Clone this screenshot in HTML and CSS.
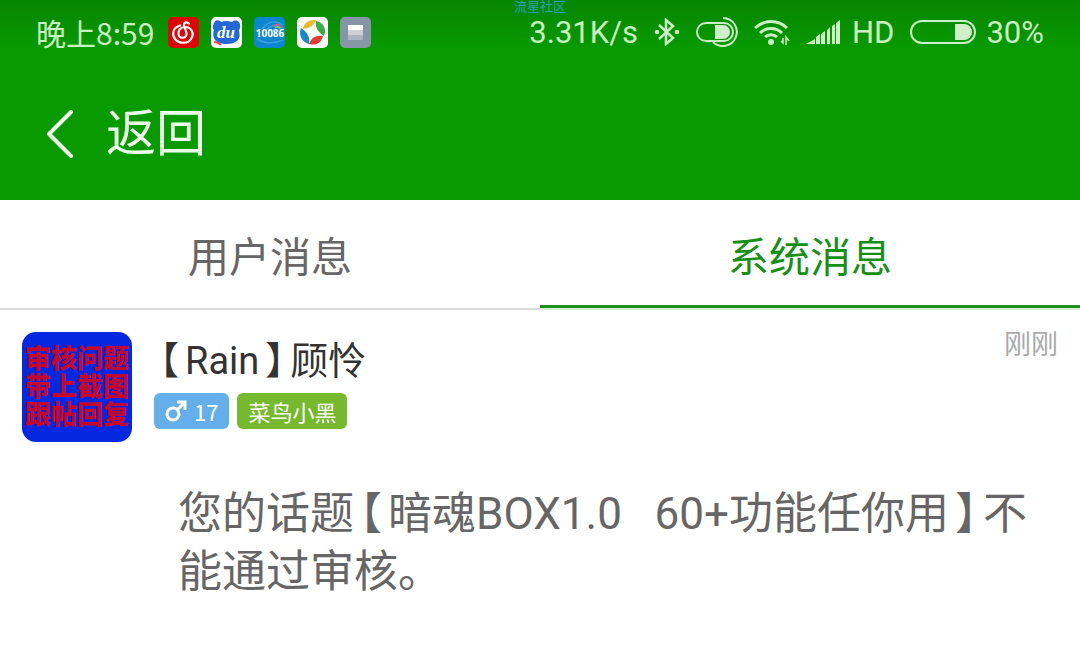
FILE: index.html
```
<!DOCTYPE html>
<html lang="zh-CN">
<head>
<meta charset="UTF-8">
<meta name="viewport" content="width=device-width, initial-scale=1.0">
<title>系统消息</title>
<link rel="stylesheet" href="styles.css">
</head>
<body>
<header class="header">
    <div class="watermark">流星社区</div>

    <div class="status-bar">
        <div class="status-left">
            <span class="clock">晚上8:59</span>
            <!-- 通知图标 -->
            <div class="app-icons">
                <svg class="app-icon" viewBox="0 0 31 31">
                    <rect width="31" height="31" rx="5" fill="#dd0505"/>
                    <path d="M12 8.500C4 11 4 18 7 22C11 27 20 27 23 22C27 16 23 10 17 10C12 10 10 14 10.500 17C11 22 18 22 18.500 17C18.500 14 16 10 16 8C16 5 19 4.500 21 6.500" fill="none" stroke="#fff" stroke-width="2.2" stroke-linecap="round"/>
                </svg>
                <svg class="app-icon" viewBox="0 0 31 31">
                    <rect width="31" height="31" rx="5" fill="#fff"/>
                    <path d="M3 6C4 2 9 3 10 5Q15 3 21 5C24 2 29 4 29 8C30 10 28 12 28 14C31 24 23 27 15 27C7 27 0 23 3 13C1 11 2 8 3 6Z" fill="#2468d8"/>
                    <path d="M3 24Q8 24 11 28L8 28Q6 26 3 26Z" fill="#e34b50"/>
                    <text x="15" y="21" class="du-text">du</text>
                </svg>
                <svg class="app-icon" viewBox="0 0 31 31">
                    <rect width="31" height="31" rx="5" fill="#0c87ce"/>
                    <path d="M8 12Q17 0 29 8M12 13Q19 5 30 12M3 22Q15 29 29 23" fill="none" stroke="#38a0dc" stroke-width="1.5"/>
                    <path d="M19 9Q24 5 28 11" fill="none" stroke="#d9657c" stroke-width="1.5"/>
                    <path d="M21 11Q24 8 26 12" fill="none" stroke="#8cc96a" stroke-width="1.5"/>
                    <text x="16" y="20" class="mobile-text">10086</text>
                </svg>
                <svg class="app-icon" viewBox="0 0 31 31">
                    <rect width="31" height="31" rx="5" fill="#fff"/>
                    <path d="M6 12C7 5 12 3 19 3C17 8 14 11 6 12Z" fill="#e9b92c"/>
                    <path d="M19 4C26 5 30 12 27 19C21 15 18 11 19 4Z" fill="#39ad45"/>
                    <path d="M12 27C14 21 19 18 26 19C24 26 19 29 12 27Z" fill="#e43c32"/>
                    <path d="M4 11C10 15 13 19 12 27C5 25 1 18 4 11Z" fill="#168ac7"/>
                </svg>
                <svg class="app-icon" viewBox="0 0 31 31">
                    <rect width="31" height="31" rx="5" fill="#8796a6"/>
                    <rect x="8" y="8" width="15" height="5" fill="#fff"/>
                    <rect x="8" y="13" width="15" height="5" fill="#cbd1d7"/>
                    <rect x="8" y="18" width="15" height="5" fill="#abb5bf"/>
                </svg>
            </div>
        </div>

        <div class="status-right">
            <span>3.31K/s</span>
            <svg width="26" height="28" viewBox="0 0 26 28">
                <path d="M5 7L19 20L12 26V2L19 8L5 21" fill="none" stroke="#c8f2c4" stroke-width="2.5"/>
                <circle cx="3" cy="14" r="2.3" fill="#c8f2c4"/>
                <circle cx="23" cy="14" r="2.3" fill="#c8f2c4"/>
            </svg>
            <svg width="42" height="30" viewBox="0 0 42 30">
                <rect x="1" y="6" width="36" height="18" rx="9" fill="none" stroke="#c8f2c4" stroke-width="2"/>
                <path d="M19 8H27A7 7 0 0 1 27 22H19Z" fill="#d0f0cc"/>
                <path d="M27 1A14 14 0 1 1 17 25" fill="none" stroke="#c8f2c4" stroke-width="2"/>
            </svg>
            <svg width="36" height="28" viewBox="0 0 36 28">
                <path d="M1 10A23 23 0 0 1 33 10M6 15A16 16 0 0 1 28 15M11 19A9 9 0 0 1 23 19" fill="none" stroke="#c8f2c4" stroke-width="3"/>
                <circle cx="17" cy="24" r="3" fill="#c8f2c4"/>
                <path d="M32 27V19L35 23M29 20V25L27 23" fill="none" stroke="#c8f2c4" stroke-width="1.5"/>
            </svg>
            <svg width="34" height="24" viewBox="0 0 34 24">
                <path d="M0 24L9 19V24ZM10 24V17L14 14V24ZM15 24V14L19 11V24ZM21 24V10L24 7V24ZM26 24V6L29 4V24ZM30 24V3L34 0V24Z" fill="#c8f2c4"/>
            </svg>
            <span class="network">HD</span>
            <svg class="battery" width="66" height="26" viewBox="0 0 66 26">
                <rect x="1" y="2" width="64" height="22" rx="11" fill="none" stroke="#c8f2c4" stroke-width="2"/>
                <path d="M45 5H54A8 8 0 0 1 54 21H45Z" fill="#d0f0cc"/>
            </svg>
            <span>30%</span>
        </div>
    </div>

    <nav class="nav-bar">
        <button class="back-btn" type="button">
            <svg width="28" height="48" viewBox="0 0 28 48">
                <path d="M25 2L3 24L25 46" fill="none" stroke="#edffeb" stroke-width="4" stroke-linecap="round" stroke-linejoin="round"/>
            </svg>
            <span>返回</span>
        </button>
    </nav>
</header>

<div class="tabs" role="tablist">
    <button class="tab" type="button" role="tab" aria-selected="false">用户消息</button>
    <button class="tab active" type="button" role="tab" aria-selected="true">系统消息</button>
</div>

<main class="message">
    <div class="avatar">
        <span>审核问题</span>
        <span>带上截图</span>
        <span>跟帖回复</span>
    </div>
    <div class="message-main">
        <div class="message-top">
            <div class="user">
                <h1 class="user-name"><span class="bracket">【</span>Rain<span class="bracket">】</span>顾怜</h1>
                <div class="badges">
                    <span class="badge badge-male">
                        <svg width="22" height="22" viewBox="0 0 22 22">
                            <circle cx="8" cy="14" r="6" fill="none" stroke="#fff" stroke-width="3"/>
                            <path d="M12 10L19 3M12 2H20V10" fill="none" stroke="#fff" stroke-width="3"/>
                        </svg>
                        17
                    </span>
                    <span class="badge badge-level">菜鸟小黑</span>
                </div>
            </div>
            <time class="time">刚刚</time>
        </div>
        <p class="message-text">您的话题<span class="bracket">【</span>暗魂BOX1.0&nbsp;&nbsp; 60+功能任你用<span class="bracket">】</span>不<wbr>能通过审核。</p>
    </div>
</main>
</body>
</html>
```
FILE: styles.css
```
* {
    box-sizing: border-box;
}

body {
    margin: 0;
    background: #fff;
    font-family: Roboto, "Noto Sans CJK SC", sans-serif;
}

button {
    padding: 0;
    border: none;
    background: none;
    font-family: inherit;
    cursor: pointer;
}

svg {
    display: block;
    flex-shrink: 0;
}

/* 顶部 */
.header {
    position: relative;
    background: linear-gradient(#078500, #089a00 48px);
    color: #c8f2c4;
}

.watermark {
    position: absolute;
    top: 0;
    left: 0;
    right: 0;
    text-align: center;
    font-size: 13px;
    line-height: 13px;
    color: #2a9fbe;
}

.status-bar {
    display: flex;
    align-items: center;
    justify-content: space-between;
    height: 64px;
    padding: 0 36px;
    font-size: 31px;
    white-space: nowrap;
}

.status-left {
    display: flex;
    align-items: center;
    gap: 14px;
}

.clock {
    font-family: "Noto Sans CJK SC", sans-serif;
    font-size: 30px;
    line-height: 40px;
}

.app-icons {
    display: flex;
    gap: 12px;
}

.app-icon {
    width: 31px;
    height: 31px;
}

.du-text {
    font: italic bold 17px "Liberation Serif", serif;
    fill: #fff;
    text-anchor: middle;
}

.mobile-text {
    font: bold 10px "Noto Sans", sans-serif;
    fill: #fff;
    text-anchor: middle;
}

.status-right {
    display: flex;
    align-items: center;
    gap: 16px;
}

.network {
    margin-left: -4px;
}

.status-right .battery {
    margin-right: -6px;
}

.nav-bar {
    height: 136px;
    padding: 4px 46px 0;
    display: flex;
    align-items: center;
}

.back-btn {
    display: flex;
    align-items: center;
    gap: 32px;
    font-size: 50px;
    line-height: 72px;
    color: #edffeb;
}

/* 标签栏 */
.tabs {
    display: flex;
}

.tab {
    flex: 1;
    height: 110px;
    border-bottom: 2px solid #dcdcdc;
    font-size: 41px;
    color: #666;
}

.tab.active {
    color: #159015;
    border-bottom-color: #d4f0d0;
    box-shadow: inset 0 -3px #1f8f1f;
}

/* 消息 */
.message {
    display: flex;
    gap: 22px;
    padding: 22px;
}

.avatar {
    width: 110px;
    height: 110px;
    flex-shrink: 0;
    display: flex;
    flex-direction: column;
    align-items: center;
    justify-content: center;
    border-radius: 14px;
    background: #0427e0;
    color: #c4082c;
    font-size: 26px;
    font-weight: 900;
    line-height: 28px;
}

.message-main {
    flex: 1;
}

.message-top {
    display: flex;
    justify-content: space-between;
}

.user-name {
    margin: 0;
    font-size: 38px;
    font-weight: 400;
    line-height: 58px;
    color: #333;
}

.bracket {
    font-feature-settings: "halt";
    margin: 0 6px;
}

.badges {
    display: flex;
    gap: 8px;
    margin-top: 3px;
}

.badge {
    display: flex;
    align-items: center;
    gap: 7px;
    height: 36px;
    padding: 0 11px;
    border-radius: 6px;
    font-family: "Noto Sans CJK SC", sans-serif;
    font-size: 22px;
    color: #fff;
}

.badge-male {
    background: #64afea;
}

.badge-level {
    background: #76b92f;
}

.time {
    font-size: 27px;
    line-height: 26px;
    color: #aaa;
}

.message-text {
    margin: 56px 24px 0;
    font-size: 44px;
    line-height: 58px;
    color: #666;
}
```
